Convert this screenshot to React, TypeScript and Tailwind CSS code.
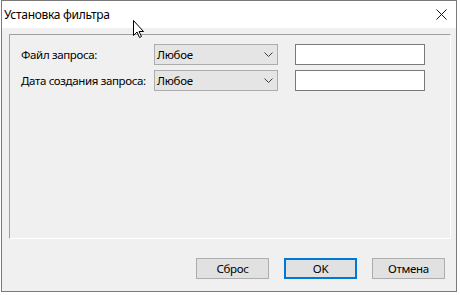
import React from "react";

const font = { fontFamily: '"Noto Sans", "Open Sans", sans-serif' };

function Chevron() {
  return (
    <svg width="9" height="5" viewBox="0 0 9 5" className="shrink-0">
      <path d="M0.5 0.5 L4.5 4.5 L8.5 0.5" fill="none" stroke="#404040" strokeWidth="1" />
    </svg>
  );
}

function Combo() {
  return (
    <div className="flex h-[21px] w-[124px] items-center justify-between border border-[#acacac] bg-[#e5e5e5] pl-[2px] pr-[4px] text-[11.5px] tracking-[-0.3px] text-black">
      <span className="leading-none">Любое</span>
      <Chevron />
    </div>
  );
}

function Row({ label }: { label: string }) {
  return (
    <div className="flex h-[21px] items-center">
      <div className="w-[133px] whitespace-nowrap text-[11.5px] leading-none tracking-[-0.35px] text-black">{label}</div>
      <Combo />
      <div className="ml-[17px] h-[21px] w-[130px] border border-[#7a7a7a] bg-white" />
    </div>
  );
}

function Btn({ children, primary }: { children: React.ReactNode; primary?: boolean }) {
  return (
    <div
      className={
        "flex h-[21px] w-[73px] items-center justify-center bg-[#e1e1e1] text-[11.5px] leading-none tracking-[-0.3px] text-black " +
        (primary ? "border-2 border-[#0078d7]" : "border border-[#adadad]")
      }
    >
      {children}
    </div>
  );
}

export default function App() {
  return (
    <div className="relative h-[295px] w-[460px] bg-white" style={font}>
      <div className="ml-[1px] flex h-[292px] w-[456px] flex-col border border-[#7a7a7a]">
        <div className="flex h-[27px] items-center justify-between bg-white pl-[2px] pr-[9px]">
          <span className="whitespace-nowrap text-[12px] leading-none tracking-[-0.3px] text-black">Установка фильтра</span>
          <svg width="11" height="11" viewBox="0 0 11 11">
            <path d="M0.5 0.5 L10.5 10.5 M10.5 0.5 L0.5 10.5" stroke="#111" strokeWidth="1" />
          </svg>
        </div>
        <div className="flex flex-1 flex-col bg-[#f0f0f0] pl-[7px] pr-[5px] pt-[6px]">
          <div className="flex h-[205px] flex-col gap-[5px] border-b border-l border-r border-t border-b-white border-l-[#a0a0a0] border-r-white border-t-[#a0a0a0] pl-[11px] pt-[9px]">
            <Row label="Файл запроса:" />
            <Row label="Дата создания запроса:" />
          </div>
          <div className="mt-[19px] flex justify-end gap-[15px] pr-[6px]">
            <Btn>Сброс</Btn>
            <Btn primary>OK</Btn>
            <Btn>Отмена</Btn>
          </div>
        </div>
      </div>
      <svg
        className="absolute left-[133px] top-[20px]"
        width="12"
        height="19"
        viewBox="0 0 12 19"
      >
        <path
          d="M0.5 0.5 L0.5 15.5 L4 12 L6.5 17.5 L8.5 16.5 L6 11.5 L10.5 11.5 Z"
          fill="white"
          stroke="black"
          strokeWidth="1"
          strokeLinejoin="miter"
        />
      </svg>
    </div>
  );
}
